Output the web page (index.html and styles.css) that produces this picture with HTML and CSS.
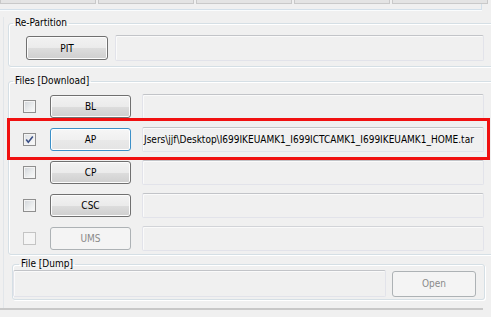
FILE: index.html
```html
<!DOCTYPE html>
<html>
<head>
<meta charset="utf-8">
<link rel="stylesheet" href="styles.css">
</head>
<body>
<div class="tabframe">
  <div class="tabs">
    <span class="tab"></span><span class="tab"></span><span class="tab"></span><span class="tab"></span><span class="tab"></span>
  </div>
</div>
<div class="page">
  <fieldset class="group group-repart">
    <legend>Re-Partition</legend>
    <div class="row row-pit">
      <button class="btn">PIT</button>
      <div class="field field-pit"></div>
    </div>
  </fieldset>

  <fieldset class="group group-files">
    <legend>Files [Download]</legend>
    <div class="rows">
      <div class="row file-row">
        <span class="check"></span>
        <button class="btn btn-file">BL</button>
        <div class="field field-file"></div>
      </div>
      <div class="row file-row">
        <span class="check checked"><svg width="11" height="11" viewBox="0 0 11 11"><path d="M2.2 5.6 L4.3 8.2 L8.8 2.6" fill="none" stroke="#3a4f86" stroke-width="1.6"/></svg></span>
        <button class="btn btn-file btn-focus">AP</button>
        <div class="field field-file"><span class="path">Jsers\jjf\Desktop\I699IKEUAMK1_I699ICTCAMK1_I699IKEUAMK1_HOME.tar</span></div>
      </div>
      <div class="row file-row">
        <span class="check"></span>
        <button class="btn btn-file">CP</button>
        <div class="field field-file"></div>
      </div>
      <div class="row file-row">
        <span class="check"></span>
        <button class="btn btn-file">CSC</button>
        <div class="field field-file"></div>
      </div>
      <div class="row file-row">
        <span class="check disabled"></span>
        <button class="btn btn-file btn-disabled">UMS</button>
        <div class="field field-file field-ums"></div>
      </div>
    </div>
    <div class="highlight"></div>
  </fieldset>

  <fieldset class="group group-dump">
    <legend>File [Dump]</legend>
    <div class="row row-dump">
      <div class="field field-dump"></div>
      <button class="btn btn-open btn-disabled">Open</button>
    </div>
  </fieldset>
</div>
<div class="bottomline"></div>
</body>
</html>
```

FILE: styles.css
```css
html, body {
  margin: 0;
  padding: 0;
}
body {
  width: 491px;
  height: 317px;
  overflow: hidden;
  background: #f0f0f0;
  font-family: "DejaVu Sans Condensed", "DejaVu Sans", sans-serif;
  font-stretch: condensed;
  font-size: 10px;
  color: #000;
}

/* top tab strip */
.tabframe {
  width: 481px;
  height: 9px;
  border-right: 1px solid #d3e0ea;
  border-bottom: 1px solid #d3e0ea;
  box-shadow: 0 1px 0 #fafcfd;
}
.tabs {
  display: flex;
  gap: 2px;
  width: 478px;
  height: 4px;
}
.tab {
  flex: 0 0 94px;
  height: 3px;
  background: #e4e4e4;
  border: 1px solid #c9c9c9;
  border-top: 0;
}

.page {
  margin-top: 7px;
  margin-left: 3px;
  padding-bottom: 8px;
  border-left: 1px solid #e2e6ea;
}

/* group boxes */
.group {
  position: relative;
  margin: 0;
  padding: 0;
  border: 1px solid #d5dfe5;
  border-radius: 3px;
  box-shadow: inset 1px 1px 0 #fff, 1px 1px 0 #fff;
  min-width: 0;
}
.group legend {
  margin-left: 4px;
  padding: 0 2px;
  line-height: 12px;
  height: 12px;
  font-size: 10px;
}
.group-repart {
  margin-left: 4px;
  width: 500px;
}
.group-files {
  margin-left: 4px;
  margin-top: 8px;
  width: 500px;
}
.group-dump {
  margin-left: 8px;
  margin-top: 3px;
  width: 471px;
}
.group-dump legend {
  margin-left: 6px;
}

.row {
  display: flex;
  align-items: center;
}
.row-pit {
  padding: 6px 0 5px 17px;
  gap: 7px;
}
.rows {
  display: flex;
  flex-direction: column;
  gap: 8px;
  padding: 7px 0 3px 14px;
}
.file-row {
  height: 25px;
}
.row-dump {
  padding: 0 0 2px 0;
  gap: 6px;
}

/* buttons */
.btn {
  font: inherit;
  font-size: 10px;
  color: #000;
  border: 1px solid #707070;
  border-radius: 3px;
  background: linear-gradient(#f2f2f2 0%, #ebebeb 50%, #dddddd 51%, #cfcfcf 100%);
  box-shadow: inset 0 0 0 1px #fcfcfc;
  padding: 0;
  height: 24px;
  width: 82px;
  text-align: center;
}
.btn-file {
  width: 81px;
  height: 23px;
  margin-left: 14px;
  margin-right: 11px;
}
.btn-focus {
  border-color: #3c90c8;
  background: linear-gradient(#f6f6f6 0%, #f0f0f0 50%, #e9e9e9 51%, #e4e4e4 100%);
  box-shadow: inset 0 0 0 1px #fff;
}
.btn-disabled {
  border-color: #adb2b5;
  background: #f4f4f4;
  color: #8a8a8a;
  box-shadow: none;
}
.btn-open {
  width: 84px;
  height: 26px;
}

/* text fields */
.field {
  box-sizing: border-box;
  border: 1px solid #e2e3ea;
  border-top-color: #c2c4c8;
  border-radius: 2px;
  background: #f0f0f0;
  box-shadow: inset 1px 1px 0 #fafafa;
  display: flex;
  align-items: center;
  overflow: hidden;
  white-space: nowrap;
}
.field-pit {
  width: 369px;
  height: 26px;
}
.field-file {
  width: 342px;
  height: 25px;
}
.field-ums {
  border-top-color: #d2d4d8;
}
.field-dump {
  width: 373px;
  height: 27px;
  margin-left: 0;
}
.path {
  padding-left: 1px;
  font-size: 10px;
}

/* checkboxes */
.check {
  box-sizing: border-box;
  flex: 0 0 13px;
  width: 13px;
  height: 13px;
  border: 1px solid #8f8f8f;
  background: linear-gradient(135deg, #d0d4d9 0%, #eceeef 60%, #fbfbfb 100%);
  box-shadow: inset 0 0 0 1px #f4f4f4;
  display: flex;
  align-items: center;
  justify-content: center;
}
.check svg {
  display: block;
}
.check.checked {
  background: linear-gradient(135deg, #dcdfe4 0%, #f0f1f2 60%, #fbfbfb 100%);
}
.check.disabled {
  border-color: #c4c4c4;
  background: #f5f5f5;
  box-shadow: none;
}

/* annotation overlay */
.highlight {
  position: absolute;
  left: -2px;
  top: 31px;
  width: 477px;
  height: 36px;
  border: 3px solid #f01010;
  pointer-events: none;
}

.bottomline {
  width: 483px;
  height: 0;
  border-top: 2px solid #c8c8c8;
}
```
